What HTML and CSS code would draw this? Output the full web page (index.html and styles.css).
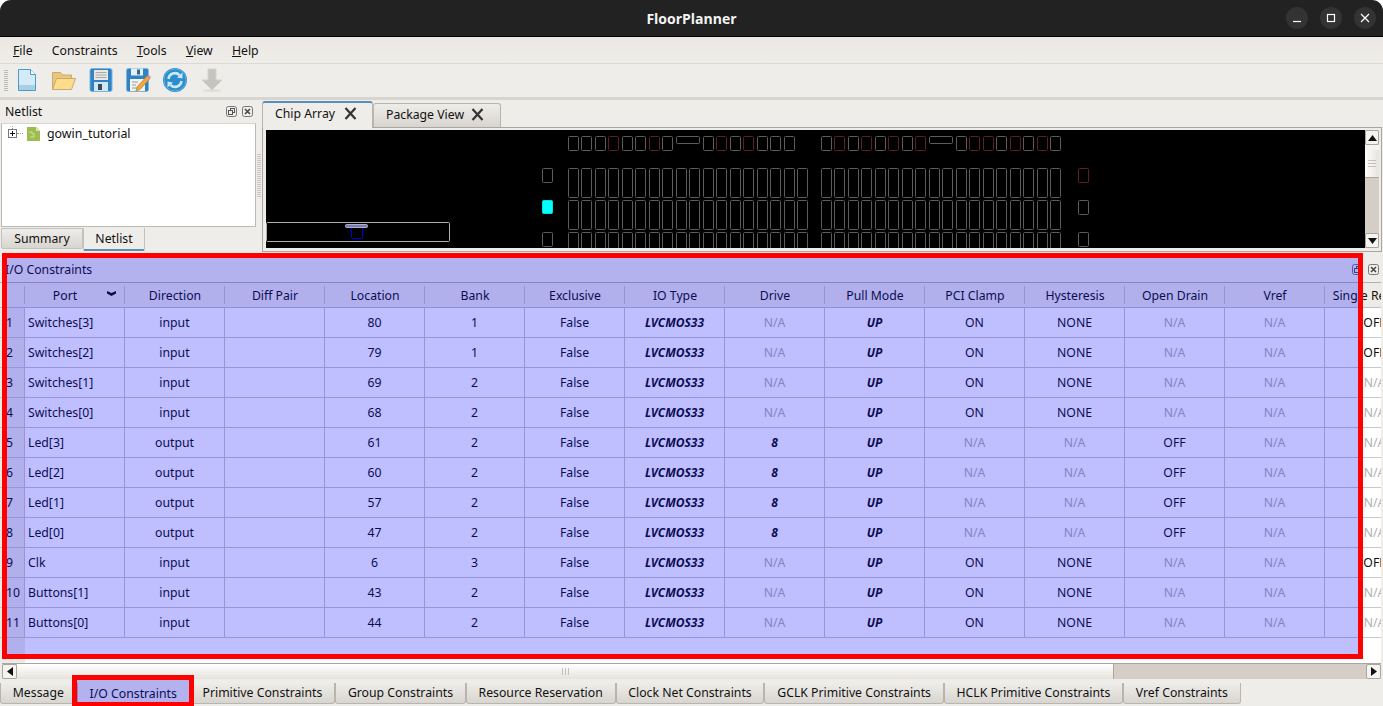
FILE: index.html
```html
<!DOCTYPE html>
<html lang="en">
  <head>
    <meta charset="UTF-8" />
    <title>FloorPlanner</title>
    <link rel="stylesheet" href="styles.css">
  </head>
  <body>
    <!-- Window title -->
    <header class="titlebar">
      <span class="title-text">FloorPlanner</span>
      <div class="win-buttons">
        <span class="win-btn"><svg width="10" height="10" viewBox="0 0 10 10"><path d="M1 8.5h8" stroke="#fff" stroke-width="1.2"/></svg></span>
        <span class="win-btn"><svg width="10" height="10" viewBox="0 0 10 10"><rect x="1.5" y="1.5" width="7" height="7" fill="none" stroke="#fff" stroke-width="1.2"/></svg></span>
        <span class="win-btn"><svg width="10" height="10" viewBox="0 0 10 10"><path d="M1 1l8 8M9 1l-8 8" stroke="#fff" stroke-width="1.2"/></svg></span>
      </div>
    </header>

    <!-- Menu -->
    <nav class="menubar">
      <span><u>F</u>ile</span>
      <span>Constraints</span>
      <span><u>T</u>ools</span>
      <span><u>V</u>iew</span>
      <span><u>H</u>elp</span>
    </nav>

    <!-- Toolbar -->
    <div class="toolbar">
      <div class="grip"></div>
      <span class="tool">
        <svg width="26" height="26" viewBox="0 0 26 26">
          <path d="M4.5 2.5h12l5 5v16h-17z" fill="#d3ebf7" stroke="#4c9ac6"/>
          <path d="M5 18h16v5H5z" fill="#a8d0e4"/>
          <path d="M16.5 2.5v5h5" fill="#fff" stroke="#4c9ac6"/>
        </svg>
      </span>
      <span class="tool">
        <svg width="26" height="26" viewBox="0 0 26 26">
          <path d="M1.5 22.5v-17h8l2 2.500h9v4" fill="#e9c877" stroke="#c8a974"/>
          <path d="M1.500 22.500l4-11h19l-4 11z" fill="#fbdd8b" stroke="#c8a974"/>
        </svg>
      </span>
      <span class="tool">
        <svg width="26" height="26" viewBox="0 0 26 26">
          <rect x="2" y="1.500" width="22" height="23" rx="2" fill="#2f82c4" stroke="#7fb4d8"/>
          <rect x="6" y="3" width="14" height="10" fill="#e8e8e4"/>
          <path d="M7.500 5.500h11M7.500 8h11M7.500 10.500h11" stroke="#a8a8a8"/>
          <rect x="6" y="15" width="14" height="9" fill="#cfe6f4"/>
          <rect x="10" y="17" width="4" height="6" fill="#3a4a58"/>
        </svg>
      </span>
      <span class="tool">
        <svg width="26" height="26" viewBox="0 0 26 26">
          <rect x="1.500" y="1.500" width="22" height="23" rx="2" fill="#2f82c4" stroke="#7fb4d8"/>
          <rect x="6" y="1.500" width="12" height="7" fill="#e8f0f4"/>
          <rect x="12" y="2.500" width="3" height="5" fill="#2f6a98"/>
          <rect x="5" y="12" width="15" height="12" fill="#f2f2ee"/>
          <path d="M7 15h6M7 18h4M7 21h8" stroke="#9a9a9a"/>
          <path d="M12 20l10-11 3 2.500-10 11-4 1.500z" fill="#f0a83c" stroke="#a8742c" stroke-width=".6"/>
          <path d="M22 9l1.500-1.500 2.500 2.500-1 1.500z" fill="#d890b8"/>
        </svg>
      </span>
      <span class="tool">
        <svg width="26" height="26" viewBox="0 0 26 26">
          <circle cx="13" cy="13" r="12" fill="#2a8dcc"/>
          <circle cx="13" cy="13" r="11" fill="none" stroke="#5fb0de"/>
          <path d="M6.500 12a6.500 6.500 0 0 1 11-4" fill="none" stroke="#cfe8f6" stroke-width="2.600"/>
          <path d="M15 10.500l5.500 1V5.500z" fill="#cfe8f6"/>
          <path d="M19.500 14a6.500 6.500 0 0 1-11 4" fill="none" stroke="#cfe8f6" stroke-width="2.600"/>
          <path d="M11 15.500l-5.500-1v6z" fill="#cfe8f6"/>
        </svg>
      </span>
      <span class="tool">
        <svg width="26" height="26" viewBox="0 0 26 26">
          <ellipse cx="13" cy="23.500" rx="10" ry="1.500" fill="#e0ded9"/>
          <path d="M9 2h8v11h6L13 23 3 13h6z" fill="#c6c4bf" stroke="#d4d2cd"/>
        </svg>
      </span>
    </div>

    <!-- Netlist dock and chip view -->
    <section class="main-row">
      <aside class="netlist-dock">
        <div class="dock-head">
          <span>Netlist</span>
          <span class="dock-btns">
            <svg class="dock-btn" width="11" height="11" viewBox="0 0 11 11"><rect x=".5" y=".5" width="10" height="10" rx="2" fill="none" stroke="#777"/><rect x="4.500" y="2.500" width="4" height="4" fill="none" stroke="#555"/><rect x="2.500" y="4.500" width="4" height="4" fill="#efede9" stroke="#555"/></svg>
            <svg class="dock-btn" width="11" height="11" viewBox="0 0 11 11"><rect x=".5" y=".5" width="10" height="10" rx="2" fill="none" stroke="#777"/><path d="M3 3l5 5M8 3l-5 5" stroke="#444" stroke-width="1.500"/></svg>
          </span>
        </div>
        <div class="tree">
          <span class="tree-plus"></span>
          <svg class="tree-icon" width="13" height="14" viewBox="0 0 13 14">
            <path d="M0 0h9l4 4v10H0z" fill="#9fbc4f"/>
            <path d="M9 0l4 4H9z" fill="#d9e4b4"/>
            <path d="M2 5h3v2h3M3 10h4V8" fill="none" stroke="#d3e0a8"/>
          </svg>
          <span>gowin_tutorial</span>
        </div>
        <div class="side-tabs">
          <span class="side-tab">Summary</span>
          <span class="side-tab side-tab-on">Netlist</span>
        </div>
      </aside>

      <div class="splitter"><div class="splitter-grip"></div></div>

      <div class="chip-pane">
        <div class="chip-tabs">
          <span class="chip-tab chip-tab-on">Chip Array
            <svg width="13" height="13" viewBox="0 0 13 13"><path d="M1.500 1l10 11M11.500 1l-10 11" stroke="#333" stroke-width="2.200"/></svg>
          </span>
          <span class="chip-tab">Package View
            <svg width="13" height="13" viewBox="0 0 13 13"><path d="M1.500 1l10 11M11.500 1l-10 11" stroke="#333" stroke-width="2.200"/></svg>
          </span>
        </div>
        <div class="chip-frame">
          <div class="chip-canvas">
            <svg id="chip-svg" width="1099" height="118"></svg>
          </div>
          <div class="vscroll">
            <span class="scroll-btn"><svg width="9" height="6" viewBox="0 0 9 6"><path d="M4.500 0l4.500 6H0z" fill="#111"/></svg></span>
            <span class="vscroll-gap"></span>
            <span class="vscroll-thumb"><i></i><i></i><i></i></span>
            <span class="vscroll-rest"></span>
            <span class="scroll-btn"><svg width="9" height="6" viewBox="0 0 9 6"><path d="M0 0h9L4.500 6z" fill="#111"/></svg></span>
          </div>
        </div>
      </div>
    </section>

    <!-- I/O Constraints dock -->
    <section class="io-dock">
      <div class="io-head">
        <span>I/O Constraints</span>
        <span class="dock-btns">
          <svg class="dock-btn" width="11" height="11" viewBox="0 0 11 11"><rect x=".5" y=".5" width="10" height="10" rx="2" fill="none" stroke="#777"/><rect x="4.500" y="2.500" width="4" height="4" fill="none" stroke="#555"/><rect x="2.500" y="4.500" width="4" height="4" fill="#efede9" stroke="#555"/></svg>
          <svg class="dock-btn" width="11" height="11" viewBox="0 0 11 11"><rect x=".5" y=".5" width="10" height="10" rx="2" fill="none" stroke="#777"/><path d="M3 3l5 5M8 3l-5 5" stroke="#444" stroke-width="1.500"/></svg>
        </span>
      </div>
      <div class="io-wrap">
        <table class="io-table">
          <thead>
            <tr>
              <th class="num"></th>
              <th class="sorted">Port<svg class="sort-mark" width="9" height="5" viewBox="0 0 9 5"><path d="M0 0l4.500 2L9 0v2.500L4.500 5 0 2.500z" fill="#111"/></svg></th>
              <th>Direction</th><th>Diff Pair</th><th>Location</th><th>Bank</th><th>Exclusive</th><th>IO Type</th><th>Drive</th><th>Pull Mode</th><th>PCI Clamp</th><th>Hysteresis</th><th>Open Drain</th><th>Vref</th><th>Single Resistor</th>
            </tr>
          </thead>
          <tbody>
            <tr><td class="num">1</td><td class="port">Switches[3]</td><td>input</td><td></td><td>80</td><td>1</td><td>False</td><td class="bi">LVCMOS33</td><td class="na">N/A</td><td class="bi">UP</td><td>ON</td><td>NONE</td><td class="na">N/A</td><td class="na">N/A</td><td>OFF</td></tr>
            <tr><td class="num">2</td><td class="port">Switches[2]</td><td>input</td><td></td><td>79</td><td>1</td><td>False</td><td class="bi">LVCMOS33</td><td class="na">N/A</td><td class="bi">UP</td><td>ON</td><td>NONE</td><td class="na">N/A</td><td class="na">N/A</td><td>OFF</td></tr>
            <tr><td class="num">3</td><td class="port">Switches[1]</td><td>input</td><td></td><td>69</td><td>2</td><td>False</td><td class="bi">LVCMOS33</td><td class="na">N/A</td><td class="bi">UP</td><td>ON</td><td>NONE</td><td class="na">N/A</td><td class="na">N/A</td><td class="na">N/A</td></tr>
            <tr><td class="num">4</td><td class="port">Switches[0]</td><td>input</td><td></td><td>68</td><td>2</td><td>False</td><td class="bi">LVCMOS33</td><td class="na">N/A</td><td class="bi">UP</td><td>ON</td><td>NONE</td><td class="na">N/A</td><td class="na">N/A</td><td class="na">N/A</td></tr>
            <tr><td class="num">5</td><td class="port">Led[3]</td><td>output</td><td></td><td>61</td><td>2</td><td>False</td><td class="bi">LVCMOS33</td><td class="bi">8</td><td class="bi">UP</td><td class="na">N/A</td><td class="na">N/A</td><td>OFF</td><td class="na">N/A</td><td class="na">N/A</td></tr>
            <tr><td class="num">6</td><td class="port">Led[2]</td><td>output</td><td></td><td>60</td><td>2</td><td>False</td><td class="bi">LVCMOS33</td><td class="bi">8</td><td class="bi">UP</td><td class="na">N/A</td><td class="na">N/A</td><td>OFF</td><td class="na">N/A</td><td class="na">N/A</td></tr>
            <tr><td class="num">7</td><td class="port">Led[1]</td><td>output</td><td></td><td>57</td><td>2</td><td>False</td><td class="bi">LVCMOS33</td><td class="bi">8</td><td class="bi">UP</td><td class="na">N/A</td><td class="na">N/A</td><td>OFF</td><td class="na">N/A</td><td class="na">N/A</td></tr>
            <tr><td class="num">8</td><td class="port">Led[0]</td><td>output</td><td></td><td>47</td><td>2</td><td>False</td><td class="bi">LVCMOS33</td><td class="bi">8</td><td class="bi">UP</td><td class="na">N/A</td><td class="na">N/A</td><td>OFF</td><td class="na">N/A</td><td class="na">N/A</td></tr>
            <tr><td class="num">9</td><td class="port">Clk</td><td>input</td><td></td><td>6</td><td>3</td><td>False</td><td class="bi">LVCMOS33</td><td class="na">N/A</td><td class="bi">UP</td><td>ON</td><td>NONE</td><td class="na">N/A</td><td class="na">N/A</td><td>OFF</td></tr>
            <tr><td class="num">10</td><td class="port">Buttons[1]</td><td>input</td><td></td><td>43</td><td>2</td><td>False</td><td class="bi">LVCMOS33</td><td class="na">N/A</td><td class="bi">UP</td><td>ON</td><td>NONE</td><td class="na">N/A</td><td class="na">N/A</td><td class="na">N/A</td></tr>
            <tr><td class="num">11</td><td class="port">Buttons[0]</td><td>input</td><td></td><td>44</td><td>2</td><td>False</td><td class="bi">LVCMOS33</td><td class="na">N/A</td><td class="bi">UP</td><td>ON</td><td>NONE</td><td class="na">N/A</td><td class="na">N/A</td><td class="na">N/A</td></tr>
          </tbody>
        </table>
        <div class="num-filler"></div>
      </div>
      <div class="hscroll">
        <span class="scroll-btn"><svg width="6" height="9" viewBox="0 0 6 9"><path d="M6 0v9L0 4.500z" fill="#111"/></svg></span>
        <span class="hscroll-thumb"><i></i><i></i><i></i></span>
        <span class="hscroll-rest"></span>
        <span class="scroll-btn"><svg width="6" height="9" viewBox="0 0 6 9"><path d="M0 0v9l6-4.500z" fill="#111"/></svg></span>
      </div>
    </section>

    <!-- Bottom tabs -->
    <div class="bottom-tabs">
      <span class="bottom-tab">Message</span>
      <span class="bottom-tab bottom-tab-on">I/O Constraints</span>
      <span class="bottom-tab">Primitive Constraints</span>
      <span class="bottom-tab">Group Constraints</span>
      <span class="bottom-tab">Resource Reservation</span>
      <span class="bottom-tab">Clock Net Constraints</span>
      <span class="bottom-tab">GCLK Primitive Constraints</span>
      <span class="bottom-tab">HCLK Primitive Constraints</span>
      <span class="bottom-tab">Vref Constraints</span>
    </div>

    <!-- Red annotation boxes drawn over the window -->
    <div class="mark mark-panel"></div>
    <div class="mark mark-tab"></div>

    <script src="chip.js"></script>
  </body>
</html>
```

FILE: styles.css
```css
/* Global Styles */
* {
  box-sizing: border-box;
}

html, body {
  height: 100%;
}

body {
  margin: 0;
  width: 1383px;
  height: 706px;
  overflow: hidden;
  position: relative;
  display: flex;
  flex-direction: column;
  background: #efede9;
  font-family: "Noto Sans", "Open Sans", sans-serif;
  font-size: 12.25px;
  color: #111;
}

/* Title bar */
.titlebar {
  height: 37px;
  flex: none;
  background: #222;
  border-bottom: 1px solid #000;
  border-radius: 11px 11px 0 0;
  box-shadow: 0 -12px 0 #fff;
  display: flex;
  align-items: center;
  justify-content: center;
  position: relative;
}

.title-text {
  color: #f4f4f4;
  font-size: 14px;
  font-weight: 700;
  font-family: "Open Sans", "Noto Sans", sans-serif;
}

.win-buttons {
  position: absolute;
  right: 7px;
  top: 7px;
  display: flex;
  gap: 12px;
}

.win-btn {
  width: 22px;
  height: 22px;
  border-radius: 50%;
  background: #333;
  display: flex;
  align-items: center;
  justify-content: center;
}

/* Menu and toolbar */
.menubar {
  height: 27px;
  flex: none;
  display: flex;
  align-items: center;
  gap: 19.25px;
  padding-left: 13px;
  background: linear-gradient(#ebe8e3, #efede9);
  border-bottom: 1px solid #dddad5;
}

.toolbar {
  height: 36px;
  flex: none;
  display: flex;
  align-items: center;
  padding: 0 0 2px 8px;
  border-bottom: 3px solid #d8d5d0;
  position: relative;
}

.grip {
  position: absolute;
  left: 4px;
  top: 6px;
  width: 4px;
  height: 22px;
  background: repeating-linear-gradient(#bdbab4 0 1px, #efede9 1px 2px);
}

.tool {
  width: 37px;
  display: flex;
  justify-content: center;
}

/* Main row */
.main-row {
  height: 152px;
  flex: none;
  display: flex;
}

.netlist-dock {
  width: 256px;
  flex: none;
  display: flex;
  flex-direction: column;
}

.dock-head {
  height: 23px;
  flex: none;
  display: flex;
  align-items: center;
  justify-content: space-between;
  padding: 0 3px 0 5px;
}

.dock-btns {
  display: flex;
  gap: 5px;
}

.tree {
  height: 104px;
  flex: none;
  margin-left: 1px;
  background: #fff;
  border: 1px solid #bdbab4;
  border-top-color: #d8d5d0;
  font-size: 12.400px;
  display: flex;
  align-items: flex-start;
  padding: 1px 0 0 25px;
  position: relative;
}

.tree-plus {
  position: absolute;
  left: 6px;
  top: 5px;
  width: 9px;
  height: 9px;
  border: 1px solid #777;
  background: linear-gradient(#111, #111) center / 5px 1px no-repeat,
    linear-gradient(#111, #111) center / 1px 5px no-repeat,
    #fff;
}

/* dotted branch lines of the tree */
.tree-plus::before {
  content: "";
  position: absolute;
  left: 3px;
  top: -4px;
  height: 3px;
  border-left: 1px dotted #999;
}

.tree-plus::after {
  content: "";
  position: absolute;
  left: 8px;
  top: 3px;
  width: 6px;
  border-top: 1px dotted #999;
}

.tree-icon {
  margin: 2px 7px 0 0;
}

.side-tabs {
  display: flex;
  padding: 1px 0 0 1px;
}

.side-tab {
  width: 82px;
  height: 21px;
  display: flex;
  align-items: center;
  justify-content: center;
  background: linear-gradient(#efede9, #d8d5d0);
  border: 1px solid #c4c1bb;
  border-radius: 0 0 2px 2px;
}

.side-tab-on {
  width: 62px;
  height: 23px;
  background: #efede9;
  border-top: 0;
  border-bottom: 2px solid #5b8fb5;
}

.splitter {
  width: 6px;
  flex: none;
  display: flex;
  align-items: center;
  justify-content: center;
}

.splitter-grip {
  width: 4px;
  height: 44px;
  background: repeating-linear-gradient(#c9c6c0 0 1px, #efede9 1px 2px);
}

.chip-pane {
  flex: 1;
  padding-right: 1px;
  display: flex;
  flex-direction: column;
}

.chip-tabs {
  height: 27px;
  flex: none;
  display: flex;
  align-items: flex-end;
}

.chip-tab {
  width: 128px;
  height: 24px;
  padding: 0 0 3px 12px;
  display: flex;
  align-items: center;
  gap: 7px;
  border: 1px solid #b8b5af;
  border-bottom: 0;
  border-radius: 3px 3px 0 0;
  background: linear-gradient(#efede9, #d8d5d0);
}

.chip-tab-on {
  width: 111px;
  height: 27px;
  margin-bottom: -1px;
  padding-bottom: 4px;
  gap: 9px;
  background: #efede9;
  border-top: 2px solid #5b8fb5;
  position: relative;
  z-index: 1;
}

.chip-frame {
  height: 125px;
  flex: none;
  display: flex;
  padding: 2px;
  border: 1px solid #a9a6a0;
}

.chip-canvas {
  width: 1099px;
  height: 118px;
  margin-left: 1px;
  background: #000;
  overflow: hidden;
}

.chip-canvas svg {
  display: block;
}

/* Scrollbars */
.vscroll {
  width: 14px;
  height: 118px;
  flex: none;
  display: flex;
  flex-direction: column;
  background: #d5cec6;
}

.scroll-btn {
  width: 14px;
  height: 15px;
  flex: none;
  display: flex;
  align-items: center;
  justify-content: center;
  background: #f5f4f1;
  border: 1px solid #a9a6a0;
  border-radius: 2px;
}

.vscroll-gap {
  height: 5px;
  flex: none;
  background: #f5f4f1;
}

.vscroll-thumb {
  height: 28px;
  flex: none;
  display: flex;
  flex-direction: column;
  align-items: center;
  justify-content: center;
  gap: 2px;
  background: linear-gradient(to right, #fff, #e6e3de);
  border-bottom: 1px solid #a9a6a0;
}

.vscroll-thumb i {
  width: 8px;
  height: 1px;
  background: #c4c1bb;
}

.vscroll-rest {
  flex: 1;
}

/* I/O dock */
.io-dock {
  height: 430px;
  flex: none;
  display: flex;
  flex-direction: column;
  padding-top: 6px;
  border-right: 2px solid #efede9;
}

.io-head {
  height: 25px;
  flex: none;
  display: flex;
  align-items: center;
  justify-content: space-between;
  padding: 0 2px 2px 5px;
  border-bottom: 1px solid #b4b1ab;
}

.io-wrap {
  height: 380px;
  flex: none;
  overflow: hidden;
  background: #fff;
  display: flex;
  flex-direction: column;
}

.io-table {
  border-collapse: separate;
  border-spacing: 0;
  table-layout: fixed;
  width: 1425px;
  flex: none;
}

.io-table th {
  width: 100px;
  height: 25px;
  padding: 0;
  font-weight: 400;
  position: relative;
  background: #edebe6 linear-gradient(#c8c6c0, #c8c6c0) right center / 1px 18px no-repeat;
  border-bottom: 1px solid #bdbdd0;
}

.io-table td {
  height: 30px;
  padding: 0;
  text-align: center;
  white-space: nowrap;
  border-right: 1px solid #c8c8c8;
  border-bottom: 1px solid #c8c8c8;
}

.io-table th.num {
  width: 25px;
}

.io-table td.num {
  text-align: left;
  padding-left: 6px;
  background: #edebe6;
}

.io-table td.port {
  text-align: left;
  padding-left: 3px;
}

.na {
  color: #b0b0b0;
}

.bi {
  font-weight: 700;
  font-style: italic;
  font-size: 12px;
}

.sort-mark {
  position: absolute;
  right: 9px;
  top: 8px;
}

.io-table th.sorted {
  padding-right: 20px;
}

.num-filler {
  flex: 1;
  width: 25px;
  background: #edebe6;
}

.hscroll {
  height: 16px;
  flex: none;
  display: flex;
  margin-left: 2px;
  background: #d5cec6;
  border-top: 1px solid #a9a6a0;
}

.hscroll .scroll-btn {
  width: 15px;
}

.hscroll-thumb {
  width: 1097px;
  flex: none;
  display: flex;
  align-items: center;
  justify-content: center;
  gap: 2px;
  background: linear-gradient(#fff, #e6e3de);
  border-right: 1px solid #a9a6a0;
}

.hscroll-thumb i {
  width: 1px;
  height: 7px;
  background: #c4c1bb;
}

.hscroll-rest {
  flex: 1;
}

/* Bottom tabs */
.bottom-tabs {
  flex: 1;
  display: flex;
  padding: 1px 0 0 0;
  align-items: flex-start;
}

.bottom-tab {
  height: 21px;
  padding: 0 11.75px 2px;
  display: flex;
  align-items: center;
  background: linear-gradient(#efede9, #d8d5d0);
  border: 1px solid #b8b5af;
  border-top: 0;
  border-radius: 0 0 3px 3px;
}

.bottom-tab-on {
  background: #efede9;
  padding: 0 12px;
}

/* Annotation */
.mark {
  position: absolute;
  border: 5px solid #f00;
  background: rgba(0, 0, 255, 0.25);
}

.mark-panel {
  left: 2px;
  top: 253px;
  width: 1361px;
  height: 406px;
}

.mark-tab {
  left: 72px;
  top: 675px;
  width: 122px;
  height: 32px;
}
```

FILE: chip.js
```js
// Chip array drawing, coordinates are page pixels minus the canvas origin
const svg = document.getElementById("chip-svg");
const ORIGIN_X = 266;
const ORIGIN_Y = 130;
const PITCH = 13.47;
const GREY = "#5c5c5c";
const RED = "#5a2222";

function addRect(x, y, w, h, stroke, fill) {
  const rect = document.createElementNS("http://www.w3.org/2000/svg", "rect");
  rect.setAttribute("x", Math.round(x) - ORIGIN_X + 0.5);
  rect.setAttribute("y", y - ORIGIN_Y + 0.5);
  rect.setAttribute("width", w);
  rect.setAttribute("height", h);
  rect.setAttribute("rx", 1);
  rect.setAttribute("fill", fill || "none");
  rect.setAttribute("stroke", stroke);
  svg.appendChild(rect);
}

// Large columns in three rows, two blocks
[568, 821].forEach(function (start) {
  for (let i = 0; i < 18; i++) {
    addRect(start + i * PITCH, 168, 10, 29, GREY);
    addRect(start + i * PITCH, 200, 10, 29, GREY);
    addRect(start + i * PITCH, 232, 10, 29, GREY);
  }
});

// Top row: small cells with one wide cell taking two slots
const topLeft = { start: 568, red: [3, 6, 11, 13], wide: 8, count: 17 };
const topRight = { start: 821, red: [1, 3, 5, 7, 11, 12, 14, 16], wide: 8, count: 18 };
[topLeft, topRight].forEach(function (block) {
  for (let i = 0; i < block.count; i++) {
    const x = block.start + i * PITCH;
    if (i === block.wide) {
      addRect(x, 136, 23, 7, GREY);
      i++;
    } else {
      addRect(x, 136, 10, 14, block.red.includes(i) ? RED : GREY);
    }
  }
});

// Side cells
addRect(542, 168, 10, 14, GREY);
addRect(542, 200, 10, 13, "#00e0e0", "#00ffff");
addRect(542, 232, 10, 14, GREY);
addRect(1078, 168, 10, 14, RED);
addRect(1078, 200, 10, 14, GREY);
addRect(1078, 232, 10, 14, GREY);

// Overview box in the corner
addRect(266, 222, 183, 19, "#b0b0b0");
addRect(351, 227, 11, 11, "#0000d0");
addRect(345, 224, 22, 3, "#b0b0b0", "#7878c8");
```
